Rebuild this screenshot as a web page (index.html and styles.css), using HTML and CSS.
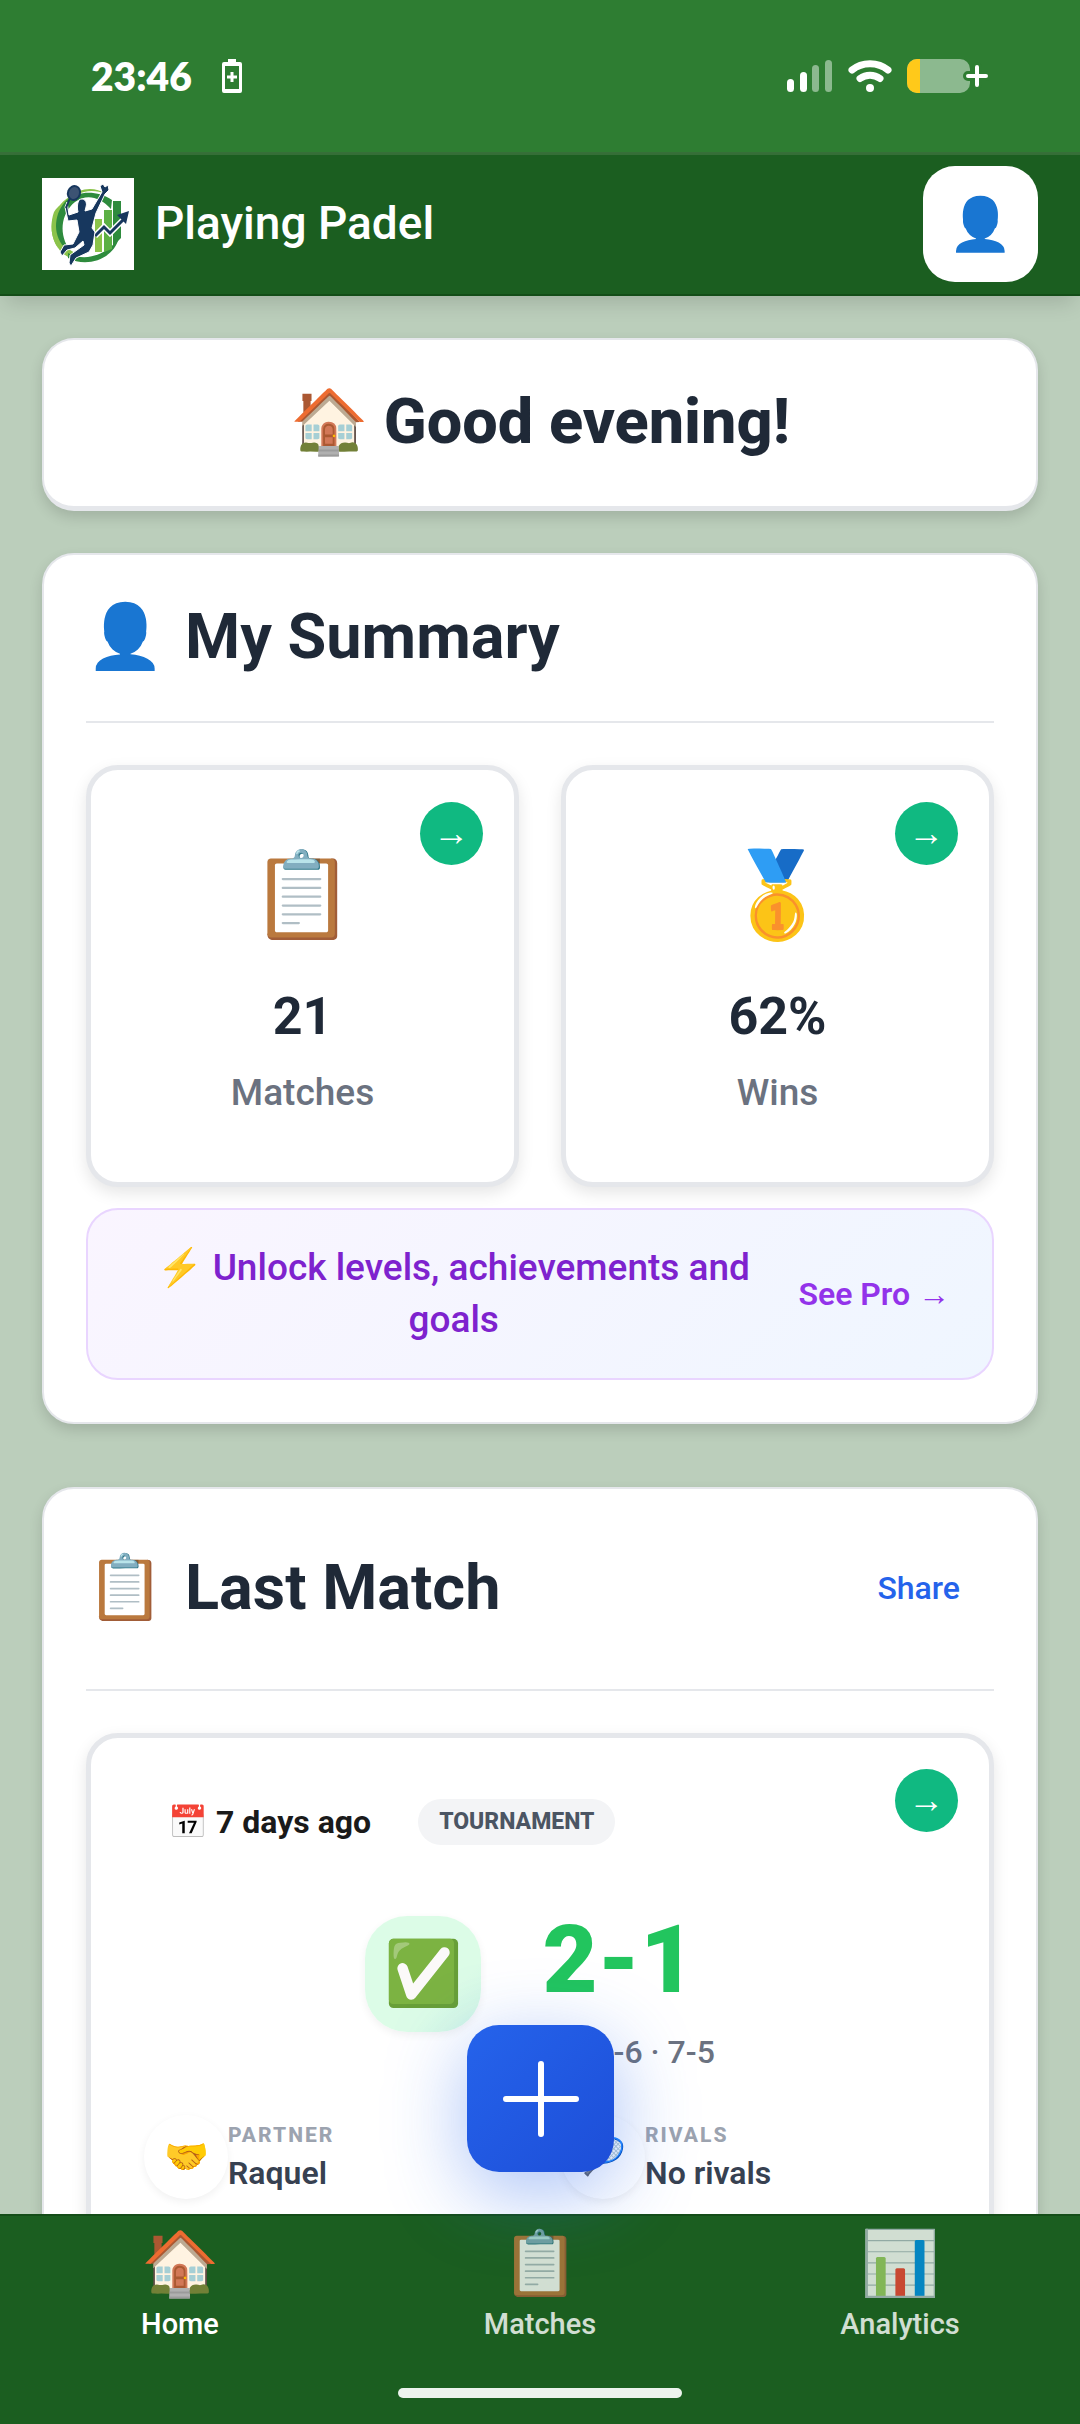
FILE: index.html
```html
<!DOCTYPE html>
<html lang="en">
<head>
    <meta charset="UTF-8">
    <meta name="viewport" content="width=device-width, initial-scale=1.0">
    <title>Playing Padel</title>
    <link rel="stylesheet" href="styles.css">
</head>
<body>
    <div class="status-bar">
        <div class="status-left">
            <span class="clock">23:46</span>
            <svg width="20" height="34" viewBox="0 0 20 34">
                <path fill="#fff" d="M6 0h8v3h4a2 2 0 0 1 2 2v27a2 2 0 0 1-2 2H2a2 2 0 0 1-2-2V5a2 2 0 0 1 2-2h4zM3 7v23h14V7z" fill-rule="evenodd"/>
                <path d="M10 13v10M5 18h10" stroke="#fff" stroke-width="3"/>
            </svg>
        </div>
        <div class="status-right">
            <svg width="46" height="34" viewBox="0 0 46 34">
                <rect x="0" y="20" width="7" height="13" rx="3.5" fill="#fff"/>
                <rect x="13" y="13" width="7" height="20" rx="3.5" fill="#fff"/>
                <rect x="25" y="6" width="7" height="27" rx="3.5" fill="#8cb98f"/>
                <rect x="38" y="1" width="7" height="32" rx="3.5" fill="#8cb98f"/>
            </svg>
            <svg width="44" height="34" viewBox="0 0 44 34" fill="none" stroke="#fff" stroke-width="7" stroke-linecap="round">
                <path d="M4 11C14 2.500 30 2.500 40 11"/>
                <path d="M12 19.500C18 15 26 15 32 19.500"/>
                <circle cx="22" cy="29" r="4" fill="#fff" stroke="none"/>
            </svg>
            <svg width="82" height="34" viewBox="0 0 82 34">
                <rect width="63" height="34" rx="10" fill="#8cb98f"/>
                <path d="M10 0h3v34h-3A10 10 0 0 1 0 24V10A10 10 0 0 1 10 0z" fill="#ffc91a"/>
                <path d="M70 8v18M61 17h18" stroke="#2e7d32" stroke-width="10" stroke-linecap="round"/>
                <path d="M70 8v18M61 17h18" stroke="#fff" stroke-width="4" stroke-linecap="round"/>
            </svg>
        </div>
    </div>

    <header class="header">
        <div class="brand">
            <svg class="logo" viewBox="0 0 92 92">
                <rect width="92" height="92" fill="#fff"/>
                <!-- court rings -->
                <path d="M27 19C10 30 4 52 16 70C8 48 14 30 34 17C44 12 54 12 64 16C52 8 38 10 27 19z" fill="#8bc34a"/>
                <path d="M12 34C5 54 13 76 33 82L36 76C20 71 13 54 17 36L22 25C18 27 14 30 12 34z" fill="#8bc34a"/>
                <path d="M25 22C12 34 10 56 22 69L28 72C17 58 18 36 33 24C44 16 57 18 69 31L70 22C56 13 38 12 25 22z" fill="#2e8b3d"/>
                <path d="M26 75C42 84 64 78 77 60C71 82 44 90 26 80z" fill="#2e8b3d"/>
                <!-- bars -->
                <path d="M53 41h7v33h-7z" fill="#8bc34a"/>
                <path d="M62 32h8v39l-8 3z" fill="#5cb044"/>
                <path d="M71 23h8v37l-8 8z" fill="#2e8b3d"/>
                <!-- arrow -->
                <path d="M53 58l9-9 6 6 13-13" fill="none" stroke="#fff" stroke-width="6"/>
                <path d="M53 58l9-9 6 6 13-13" fill="none" stroke="#17375e" stroke-width="3"/>
                <path d="M75 37l12-4-3 13z" fill="#17375e"/>
                <!-- player -->
                <path d="M25 24L27 37L36 34C35 30 35 26 37 22C41 19 46 23 44 29L43 33L50 31L60 14L58 8L61 6L63 9L66 7L67 12L63 16L54 35L50 50L53 54L51 67L47 74L34 80L29 88L27 85L28 77L42 67L41 63L33 70L25 72L20 78L18 74L22 67L31 66L37 54L35 42L26 43L23 29z" fill="#17375e" stroke="#fff" stroke-width="1"/>
                <ellipse cx="32" cy="15" rx="6" ry="7" transform="rotate(20 32 15)" fill="#3c5373" stroke="#17375e" stroke-width="2"/>
                <path d="M28 20l-4 10" stroke="#17375e" stroke-width="2"/>
            </svg>
            <span class="brand-name">Playing Padel</span>
        </div>
        <button class="avatar" type="button" aria-label="Profile">👤</button>
    </header>

    <main class="content">
        <section class="card greeting">
            <h1>🏠 Good evening!</h1>
        </section>

        <section class="card summary">
            <div class="card-header">
                <h2><span class="icon">👤</span>My Summary</h2>
            </div>
            <div class="stats">
                <a class="tile stat" href="#matches">
                    <span class="go">→</span>
                    <span class="stat-icon">📋</span>
                    <span class="stat-value">21</span>
                    <span class="stat-label">Matches</span>
                </a>
                <a class="tile stat" href="#wins">
                    <span class="go">→</span>
                    <span class="stat-icon">🥇</span>
                    <span class="stat-value">62%</span>
                    <span class="stat-label">Wins</span>
                </a>
            </div>
            <div class="promo">
                <p>⚡ Unlock levels, achievements and goals</p>
                <a href="#pro">See Pro →</a>
            </div>
        </section>

        <section class="card">
            <div class="card-header">
                <h2><span class="icon">📋</span>Last Match</h2>
                <button class="share" type="button">Share</button>
            </div>
            <div class="tile match">
                <a class="go" href="#match" aria-label="Open match">→</a>
                <div class="match-meta">
                    <span class="match-date">📅 7 days ago</span>
                    <span class="tag">TOURNAMENT</span>
                </div>
                <div class="score">
                    <span class="result">✅</span>
                    <div class="score-text">
                        <strong>2-1</strong>
                        <span class="sets">6-3 · 4-6 · 7-5</span>
                    </div>
                </div>
                <div class="players">
                    <div class="player">
                        <span class="player-icon">🤝</span>
                        <div>
                            <div class="player-role">PARTNER</div>
                            <div class="player-name">Raquel</div>
                        </div>
                    </div>
                    <div class="player">
                        <span class="player-icon">🎾</span>
                        <div>
                            <div class="player-role">RIVALS</div>
                            <div class="player-name">No rivals</div>
                        </div>
                    </div>
                </div>
            </div>
        </section>
    </main>

    <nav class="bottom-nav">
        <button class="fab" type="button" aria-label="Add match">
            <svg width="76" height="76" viewBox="0 0 76 76" stroke="#fff" stroke-width="6" stroke-linecap="round">
                <path d="M38 3v70M3 38h70"/>
            </svg>
        </button>
        <div class="nav-items">
            <a class="nav-item active" href="#home"><span class="icon">🏠</span>Home</a>
            <a class="nav-item" href="#matches"><span class="icon">📋</span>Matches</a>
            <a class="nav-item" href="#analytics"><span class="icon">📊</span>Analytics</a>
        </div>
        <div class="home-bar"></div>
    </nav>
</body>
</html>
```
FILE: styles.css
```css
* {
    box-sizing: border-box;
}
body {
    margin: 0;
    height: 100vh;
    display: flex;
    flex-direction: column;
    background: #bbcebb;
    color: #1f2937;
    font-family: Roboto, sans-serif;
}
h1, h2, p {
    margin: 0;
}
a {
    color: inherit;
    text-decoration: none;
}
button {
    border: none;
    padding: 0;
    font-family: inherit;
    cursor: pointer;
}

/* status bar */
.status-bar {
    display: flex;
    justify-content: space-between;
    align-items: center;
    height: 155px;
    padding: 0 91px;
    background: #2e7d32;
    border-bottom: 3px solid #366f38;
}
.status-left, .status-right {
    display: flex;
    align-items: center;
}
.status-left {
    gap: 30px;
}
.status-right {
    gap: 15px;
}
.clock {
    color: #fff;
    font-family: Lato, sans-serif;
    font-size: 39px;
    font-weight: 800;
}

/* header */
.header {
    display: flex;
    justify-content: space-between;
    align-items: center;
    padding: 11px 42px 12px;
    background: #1b5e20;
    border-bottom: 2px solid #144d18;
    box-shadow: 0 12px 20px -6px rgba(0, 0, 0, 0.15);
    z-index: 2;
}
.brand {
    display: flex;
    align-items: center;
    gap: 21px;
}
.logo {
    width: 92px;
    height: 92px;
}
.brand-name {
    color: #fff;
    font-size: 46px;
    font-weight: 500;
    line-height: 52px;
    padding-bottom: 2px;
}
.avatar {
    width: 115px;
    height: 116px;
    border-radius: 32px;
    background: #fff;
    font-size: 52px;
}

/* cards */
.content {
    flex: 1;
    min-height: 0;
    overflow-y: auto;
    scrollbar-width: none;
    padding: 42px;
}
.card {
    background: #fff;
    border: 2px solid #e5e7eb;
    border-radius: 32px;
    padding: 0 42px 42px;
    box-shadow: 0 6px 14px rgba(0, 0, 0, 0.14);
}
.greeting {
    padding: 41px 42px 43px;
    border-bottom-width: 5px;
    text-align: center;
    margin-bottom: 42px;
}
.greeting h1 {
    font-size: 63px;
    font-weight: 800;
    line-height: 82px;
}
.summary {
    margin-bottom: 63px;
}
.card-header {
    display: flex;
    justify-content: space-between;
    align-items: center;
    padding: 41px 0 43px;
    border-bottom: 2px solid #e5e7eb;
    margin-bottom: 42px;
}
.card-header h2 {
    display: flex;
    align-items: center;
    gap: 21px;
    font-size: 63px;
    font-weight: 700;
    line-height: 82px;
}
.share {
    height: 116px;
    padding: 0 34px;
    background: none;
    color: #2563eb;
    font-size: 32px;
    font-weight: 500;
}

/* tiles */
.tile {
    position: relative;
    background: #fff;
    border: 5px solid #e5e7eb;
    border-radius: 32px;
    box-shadow: 0 6px 16px rgba(0, 0, 0, 0.1);
}
.go {
    position: absolute;
    top: 32px;
    right: 31px;
    width: 63px;
    height: 63px;
    border-radius: 50%;
    background: #10b981;
    color: #fff;
    font-size: 36px;
    font-weight: 700;
    line-height: 63px;
    text-align: center;
}
.match .go {
    top: 31px;
}
.stats {
    display: grid;
    grid-template-columns: 1fr 1fr;
    gap: 42px;
    margin-bottom: 21px;
}
.stat {
    display: flex;
    flex-direction: column;
    align-items: center;
    padding: 71px 0 65px;
}
.stat-icon {
    font-size: 84px;
    line-height: 110px;
    margin-bottom: 32px;
}
.stat-value {
    font-size: 52px;
    font-weight: 700;
    line-height: 68px;
    margin-bottom: 18px;
}
.stat-label {
    color: #6b7280;
    font-size: 37px;
    font-weight: 500;
    line-height: 48px;
}
.promo {
    display: flex;
    align-items: center;
    gap: 21px;
    padding: 32px 42px;
    border: 2px solid #e9d5ff;
    border-radius: 32px;
    background: linear-gradient(135deg, #faf5ff, #eff6ff);
}
.promo p {
    flex: 1;
    text-align: center;
    color: #7e22ce;
    font-size: 37px;
    font-weight: 500;
    line-height: 52px;
}
.promo a {
    color: #9333ea;
    font-size: 32px;
    font-weight: 600;
}

/* last match */
.match {
    padding: 61px 53px;
}
.match-meta {
    display: flex;
    align-items: center;
    gap: 47px;
    padding-left: 24px;
    margin-bottom: 71px;
}
.match-date {
    color: #1a1a1a;
    font-size: 32px;
    font-weight: 700;
    line-height: 44px;
}
.tag {
    padding: 0 21px;
    border-radius: 23px;
    background: #f3f4f6;
    color: #4b5563;
    font-size: 23px;
    font-weight: 800;
    line-height: 46px;
}
.score {
    display: flex;
    justify-content: center;
    gap: 42px;
    margin-bottom: 43px;
}
.result {
    width: 116px;
    height: 116px;
    border-radius: 42px;
    background: linear-gradient(135deg, #dcfce7 70%, #d1f5e5);
    box-shadow: 0 3px 8px rgba(0, 0, 0, 0.06);
    font-size: 63px;
    line-height: 116px;
    text-align: center;
}
.score-text {
    display: flex;
    flex-direction: column;
    align-items: center;
    gap: 28px;
}
.score-text strong {
    color: #22c55e;
    font-size: 95px;
    font-weight: 900;
    line-height: 88px;
}
.sets {
    color: #6b7280;
    font-size: 32px;
    font-weight: 500;
    line-height: 40px;
}
.players {
    display: grid;
    grid-template-columns: 1fr 1fr;
    gap: 42px;
}
.player {
    display: flex;
    align-items: center;
}
.player-icon {
    width: 84px;
    height: 84px;
    border-radius: 50%;
    box-shadow: 0 3px 8px rgba(0, 0, 0, 0.06);
    font-size: 36px;
    line-height: 84px;
    text-align: center;
}
.player-role {
    color: #9ca3af;
    font-size: 21px;
    font-weight: 800;
    letter-spacing: 2px;
    line-height: 32px;
}
.player-name {
    color: #374151;
    font-size: 32px;
    font-weight: 600;
    line-height: 44px;
}

/* bottom nav */
.bottom-nav {
    position: relative;
    height: 210px;
    display: flex;
    flex-direction: column;
    justify-content: space-between;
    align-items: center;
    padding: 5px 0 26px;
    background: #1b5e20;
    border-top: 2px solid #144d18;
}
.nav-items {
    display: grid;
    grid-template-columns: repeat(3, 1fr);
    width: 100%;
}
.nav-item {
    display: flex;
    flex-direction: column;
    align-items: center;
    color: #fff;
    font-size: 29px;
    font-weight: 500;
    line-height: 34px;
    opacity: 0.8;
}
.nav-item .icon {
    font-size: 63px;
    line-height: 86px;
}
.nav-item.active {
    opacity: 1;
}
.fab {
    position: absolute;
    bottom: 252px;
    left: calc(50% - 73px);
    display: flex;
    align-items: center;
    justify-content: center;
    width: 147px;
    height: 147px;
    border-radius: 32px;
    background: linear-gradient(135deg, #2563eb, #1d4ed8);
    box-shadow: 0 20px 80px rgba(37, 99, 235, 0.4);
}
.home-bar {
    width: 284px;
    height: 10px;
    border-radius: 5px;
    background: #edf3ed;
}
```
